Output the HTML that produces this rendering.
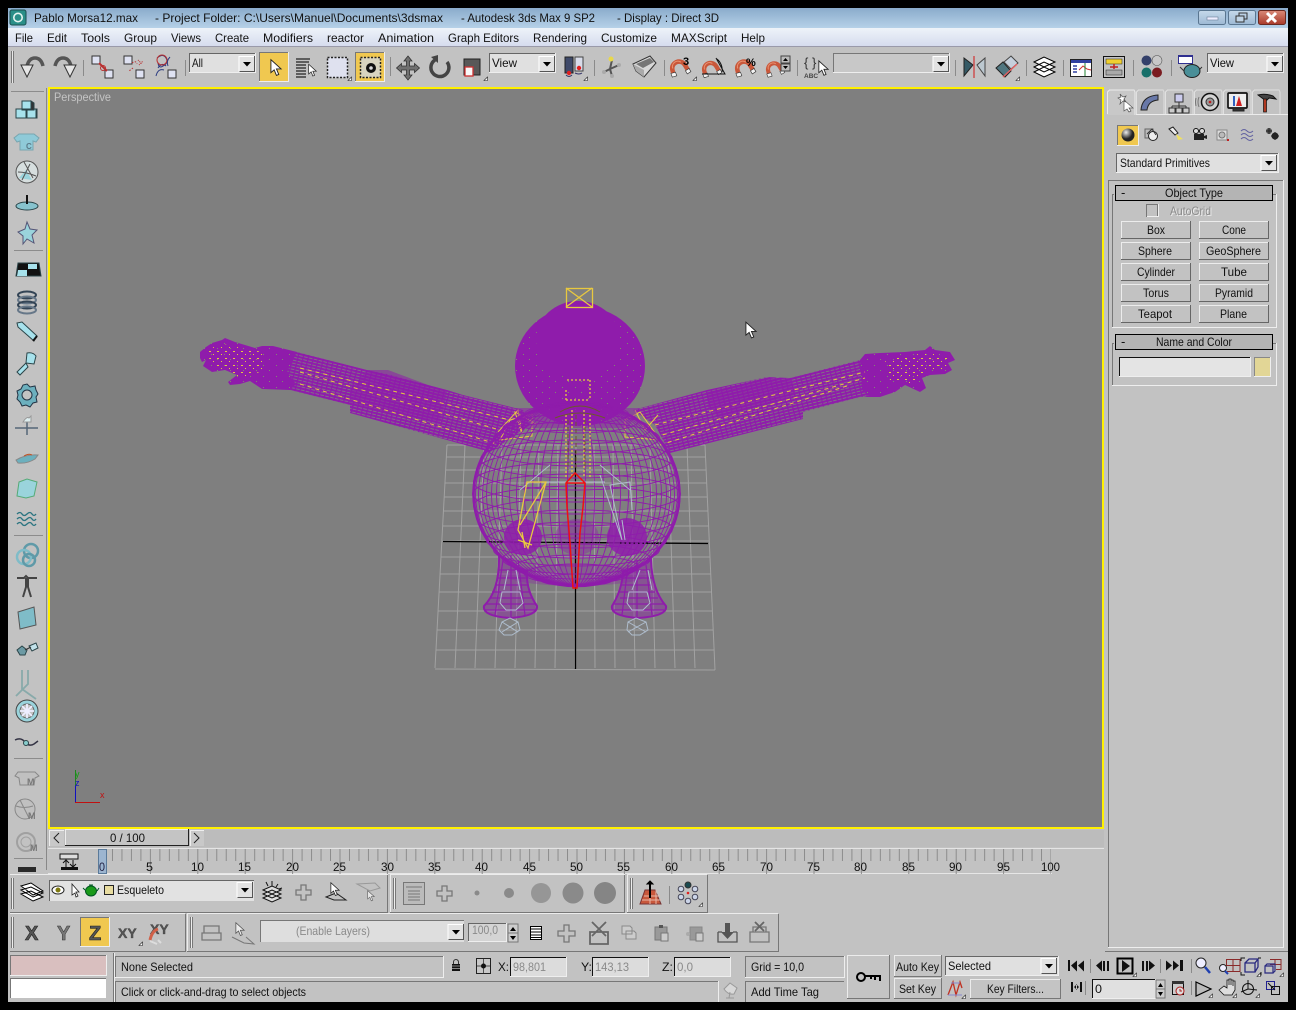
<!DOCTYPE html>
<html><head><meta charset="utf-8"><title>Pablo Morsa12.max - 3ds Max 9</title>
<style>
html,body{margin:0;padding:0;background:#000;width:1296px;height:1010px;overflow:hidden}
svg{display:block}
text{font-family:"Liberation Sans",sans-serif;font-size:12px;fill:#111}
.g{fill:#8a8a8a}
.h{fill:none;stroke:#ececec}
.s{fill:none;stroke:#6a6a6a}
.k{shape-rendering:crispEdges}
.sep{stroke:#8a8a8a;stroke-width:1;shape-rendering:crispEdges}
</style></head><body>
<svg width="1296" height="1010" viewBox="0 0 1296 1010" xmlns="http://www.w3.org/2000/svg">
<defs>
<linearGradient id="tb" x1="0" y1="0" x2="0" y2="1"><stop offset="0" stop-color="#8aabcb"/><stop offset="1" stop-color="#b6d1e8"/></linearGradient>
<linearGradient id="mb" x1="0" y1="0" x2="0" y2="1"><stop offset="0" stop-color="#eef3f9"/><stop offset="1" stop-color="#d6dcee"/></linearGradient>
<linearGradient id="cl" x1="0" y1="0" x2="0" y2="1"><stop offset="0" stop-color="#d98a78"/><stop offset="1" stop-color="#a93a2a"/></linearGradient>
<linearGradient id="wb" x1="0" y1="0" x2="0" y2="1"><stop offset="0" stop-color="#c6d9ea"/><stop offset="1" stop-color="#9db9d4"/></linearGradient>
<radialGradient id="sph" cx=".35" cy=".3"><stop offset="0" stop-color="#eee"/><stop offset="1" stop-color="#222"/></radialGradient>
<pattern id="tick" width="9.48" height="12" patternUnits="userSpaceOnUse" x="102.5" y="849"><rect width="1" height="12" fill="#8c8c8c"/></pattern>
<pattern id="tick5" width="47.4" height="13" patternUnits="userSpaceOnUse" x="102.5" y="860"><rect width="1" height="13" fill="#8c8c8c"/></pattern>
<pattern id="armL" width="5" height="6" patternUnits="userSpaceOnUse" patternTransform="rotate(14)"><rect width="5" height="6" fill="#7f7f7f"/><rect width="5" height="2.2" fill="#8f1cab"/><rect y="3" width="5" height="2.200" fill="#8f1cab"/><rect width="1.300" height="6" fill="#8f1cab"/></pattern>
<pattern id="armR" width="5" height="6" patternUnits="userSpaceOnUse" patternTransform="rotate(-14)"><rect width="5" height="6" fill="#7f7f7f"/><rect width="5" height="2.2" fill="#8f1cab"/><rect y="3" width="5" height="2.200" fill="#8f1cab"/><rect width="1.300" height="6" fill="#8f1cab"/></pattern>
<pattern id="speck" width="13" height="11" patternUnits="userSpaceOnUse"><rect width="13" height="11" fill="#8f1cab"/><rect x="3" y="2" width="1" height="1" fill="#7f8a6f"/><rect x="9" y="7" width="1" height="1" fill="#7f8a6f"/></pattern>
<pattern id="yst" width="8" height="7" patternUnits="userSpaceOnUse"><rect x="1" y="1" width="2" height="1" fill="#e8c840"/><rect x="5" y="4" width="1" height="1" fill="#e8c840"/></pattern>
<symbol id="dd" viewBox="0 0 16 16" overflow="visible"><rect x="0" y="0" width="16" height="16" fill="#e2e2e2"/><path d="M0 15.5V.5H15.5" fill="none" stroke="#fff"/><path d="M.5 15.5H15.5V0" fill="none" stroke="#555"/><path d="M4 6h8l-4 4.5z" fill="#000"/></symbol>
<symbol id="cur" viewBox="0 0 13 20" overflow="visible"><path d="M1 1V15L4.5 12 7 18 9.5 17 7 11H12Z" fill="#fff" stroke="#222" stroke-width="1"/></symbol>
<symbol id="mag" viewBox="0 0 22 22" overflow="visible"><path d="M4 18 L2.500 12 A7.500 7.500 0 0 1 16 6.500 L20 13" fill="none" stroke="#c9573a" stroke-width="5"/><path d="M3 11 A6 6 0 0 1 12 4" fill="none" stroke="#e89070" stroke-width="1.200"/><path d="M1 16.500l5-1.500 1.500 4-5 1.500zM17 13.500l4-2.500 2 3.500-4 2.500z" fill="#f4f4f4" stroke="#333" stroke-width=".7"/></symbol>
<symbol id="cm" viewBox="0 0 4 4" overflow="visible"><path d="M0 3.5H3.5V0z" fill="#fff" stroke="#222" stroke-width=".6"/></symbol>
</defs>

<rect width="1296" height="1010" fill="#000"/>
<rect x="8" y="8" width="1280" height="994" fill="#c2c2c2"/>

<!-- title bar -->
<rect x="8" y="8" width="1280" height="20" fill="url(#tb)"/>
<rect x="10" y="10" width="16" height="15" rx="2" fill="#2a8f88" stroke="#1a4f4f"/>
<circle cx="18" cy="17.5" r="4.2" fill="none" stroke="#e4f4f0" stroke-width="1.6"/>
<text x="34" y="22" textLength="104" lengthAdjust="spacingAndGlyphs">Pablo Morsa12.max</text>
<text x="155" y="22" textLength="288" lengthAdjust="spacingAndGlyphs">- Project Folder: C:\Users\Manuel\Documents\3dsmax</text>
<text x="461" y="22" textLength="134" lengthAdjust="spacingAndGlyphs">- Autodesk 3ds Max 9 SP2</text>
<text x="617" y="22" textLength="102" lengthAdjust="spacingAndGlyphs">- Display : Direct 3D</text>
<rect x="1198.500" y="10.500" width="27" height="14" rx="2" fill="url(#wb)" stroke="#5a7690"/>
<rect x="1207" y="17" width="11" height="3" fill="#eef" stroke="#6a7f96" stroke-width=".6"/>
<rect x="1228.500" y="10.500" width="27" height="14" rx="2" fill="url(#wb)" stroke="#5a7690"/>
<rect x="1239" y="13" width="8" height="6" fill="none" stroke="#333"/><rect x="1236" y="16" width="8" height="6" fill="#c0d4e6" stroke="#333"/>
<rect x="1258.500" y="10.500" width="27" height="14" rx="2" fill="url(#cl)" stroke="#6a2a20"/>
<path d="M1267 13l9 9M1276 13l-9 9" stroke="#fff" stroke-width="3"/>

<!-- menu bar -->
<rect x="8" y="28" width="1280" height="18" fill="url(#mb)"/>
<rect x="8" y="46" width="1280" height="1" fill="#9a9aaa"/>
<text x="15" y="42" textLength="18" lengthAdjust="spacingAndGlyphs">File</text>
<text x="47" y="42" textLength="20" lengthAdjust="spacingAndGlyphs">Edit</text>
<text x="81" y="42" textLength="29" lengthAdjust="spacingAndGlyphs">Tools</text>
<text x="124" y="42" textLength="33" lengthAdjust="spacingAndGlyphs">Group</text>
<text x="171" y="42" textLength="30" lengthAdjust="spacingAndGlyphs">Views</text>
<text x="215" y="42" textLength="34" lengthAdjust="spacingAndGlyphs">Create</text>
<text x="263" y="42" textLength="50" lengthAdjust="spacingAndGlyphs">Modifiers</text>
<text x="327" y="42" textLength="37" lengthAdjust="spacingAndGlyphs">reactor</text>
<text x="378" y="42" textLength="56" lengthAdjust="spacingAndGlyphs">Animation</text>
<text x="448" y="42" textLength="71" lengthAdjust="spacingAndGlyphs">Graph Editors</text>
<text x="533" y="42" textLength="54" lengthAdjust="spacingAndGlyphs">Rendering</text>
<text x="601" y="42" textLength="56" lengthAdjust="spacingAndGlyphs">Customize</text>
<text x="671" y="42" textLength="56" lengthAdjust="spacingAndGlyphs">MAXScript</text>
<text x="741" y="42" textLength="24" lengthAdjust="spacingAndGlyphs">Help</text>

<!-- main toolbar -->
<g class="k"><rect x="11" y="51" width="1" height="32" fill="#777"/><rect x="13" y="51" width="1" height="32" fill="#777"/><rect x="12" y="51" width="1" height="32" fill="#e8e8e8"/></g>
<path d="M27 66Q29 58 35 58 41 58 43 66" fill="none" stroke="#555" stroke-width="3.5"/><path d="M21 65H33L27 77Z" fill="#e6e6e6" stroke="#333"/>
<path d="M55 66Q57 58 63 58 69 58 71 66" fill="none" stroke="#555" stroke-width="3.5"/><path d="M64 65H76L70 77Z" fill="#e6e6e6" stroke="#333"/>
<g class="sep"><path d="M83.500 60V76M185.500 60V76M390.500 57V76M594.500 60V76M664.500 60V76M797.500 60V76M955.500 60V76M1026.500 60V76M1063.500 60V76M1133.500 60V76M1171.500 60V76"/></g>
<!-- link -->
<rect x="92" y="56" width="8" height="8" fill="#dfe2f2" stroke="#333"/><rect x="105" y="70" width="8" height="8" fill="#dfe2f2" stroke="#333"/><path d="M99 63l8 8" stroke="#b83030" stroke-width="2"/><circle cx="103" cy="68" r="2.500" fill="none" stroke="#b83030"/>
<rect x="124" y="56" width="8" height="8" fill="#dfe2f2" stroke="#333"/><rect x="136" y="70" width="8" height="8" fill="#dfe2f2" stroke="#333"/><path d="M132 63q4-3 5 1M133 68l-4 3" stroke="#b83030" fill="none" stroke-dasharray="1.500 1.500"/><path d="M138 60l4 4M139 65l4-4" stroke="#b83030" stroke-dasharray="1 1"/>
<path d="M157 58q6-5 9 0t-3 8q-4 3-5-3M158 68q4-6 8-2M156 76q2-8 8-6" fill="none" stroke="#2a3a80"/><circle cx="162" cy="60" r="5" fill="none" stroke="#b83030"/><path d="M170 57q-4 4-2 9" stroke="#2a3a80" fill="none"/><rect x="168" y="70" width="8" height="8" fill="#dfe2f2" stroke="#333"/>
<!-- All dropdown -->
<rect x="189" y="53" width="67" height="20" fill="#e0e0e0" class="k"/><path class="k" d="M189.500 73V53.500H256" fill="none" stroke="#666" stroke-width="1"/><path class="k" d="M189 72.500H255.500V53" fill="none" stroke="#eee"/>
<use href="#dd" x="239" y="56" width="16" height="16"/>
<text x="192" y="67" textLength="11" lengthAdjust="spacingAndGlyphs">All</text>
<!-- select btn -->
<rect x="259" y="52" width="30" height="30" fill="#f0c850" class="k"/><path class="k" d="M259.500 82V52.500H289" fill="none" stroke="#777"/><path class="k" d="M259 81.500H288.500V52" fill="none" stroke="#eee"/>
<use href="#cur" x="270" y="58" width="12" height="20"/>
<!-- select by name -->
<path d="M296 59H310M296 62H309M296 65H306M296 68H306M296 71H306M296 74H306M296 77H306" stroke="#222" stroke-width="1.2"/><use href="#cur" x="308" y="63" width="9" height="15"/>
<rect x="327.500" y="57.500" width="20" height="20" fill="#dfe1ef" stroke="#222" stroke-dasharray="2 1.500" stroke-width="1.500"/><use href="#cm" x="348" y="77" width="4" height="4"/>
<rect x="355" y="52" width="30" height="30" fill="#f0c850" class="k"/><path class="k" d="M355.500 82V52.500H385" fill="none" stroke="#777"/><path class="k" d="M355 81.500H384.500V52" fill="none" stroke="#eee"/>
<rect x="360.500" y="57.500" width="20" height="20" fill="#d8d4c0" stroke="#222" stroke-dasharray="2 1.500" stroke-width="1.500"/><circle cx="371" cy="68" r="5" fill="#111"/><circle cx="371" cy="68" r="1.800" fill="#ddd"/>
<!-- move -->
<path d="M408 56l4 5h-2.500v5H414.500v-2.500l5 4.500-5 4.500V70H409.500v5H412l-4 5-4-5h2.500V70H401.500v2.500l-5-4.500 5-4.500V66H406.500V61H404z" fill="#707070" stroke="#333" stroke-width=".8"/>
<!-- rotate -->
<path d="M435 60A9 9 0 1 0 447 62" fill="none" stroke="#444" stroke-width="3.500"/><path d="M431 57l7-2 0 8z" fill="#444"/>
<!-- scale -->
<rect x="464" y="59" width="16" height="16" fill="#585858" stroke="#222"/><rect x="465" y="67" width="8" height="9" fill="#f8f8f8" stroke="#cc3030" stroke-width="1.300"/>
<use href="#cm" x="484" y="77" width="4" height="4"/>
<!-- View dd -->
<rect x="489" y="53" width="67" height="20" fill="#e0e0e0" class="k"/><path class="k" d="M489.500 73V53.500H556" fill="none" stroke="#666"/><path class="k" d="M489 72.500H555.500V53" fill="none" stroke="#eee"/>
<use href="#dd" x="539" y="56" width="16" height="16"/>
<text x="492" y="67" textLength="25" lengthAdjust="spacingAndGlyphs">View</text>
<!-- pivot -->
<rect x="565" y="57" width="8" height="16" fill="#3f4a6a" stroke="#222"/><rect x="575" y="57" width="8" height="14" fill="#d8dcea" stroke="#444"/><circle cx="569" cy="73" r="2.200" fill="#e02020"/><circle cx="579" cy="68" r="2.200" fill="#e02020"/><path d="M566 75q3 3 6 0M575 73q4 2 7 0" stroke="#336" fill="none"/>
<use href="#cm" x="584" y="77" width="4" height="4"/>
<!-- manipulate -->
<path d="M612 60L610 69 604 72M610 69L619 65M610 69L612 76" stroke="#555" stroke-width="2" fill="none"/><circle cx="611" cy="59" r="2.500" fill="#e8d84a"/><circle cx="604" cy="72" r="2" fill="#aaa"/><circle cx="619" cy="65" r="2" fill="#aaa"/><circle cx="612" cy="76" r="2" fill="#aaa"/>
<!-- keyboard -->
<path d="M633 64L650 56 656 63 644 77 636 71z" fill="#d8d8d8" stroke="#333"/><path d="M636 64L650 58 654 62 643 68z" fill="#777"/><path d="M636 71L644 77V70L633 64z" fill="#aaa"/>
<!-- snaps -->
<use href="#mag" x="670" y="58" width="20" height="21"/><text x="683" y="65" style="font-size:11px;font-weight:bold;fill:#000">3</text><use href="#cm" x="693" y="77" width="4" height="4"/>
<use href="#mag" x="702" y="60" width="19" height="19"/><path d="M702 74H725L716 58M717 59A14 14 0 0 1 722 72" fill="none" stroke="#111"/>
<use href="#mag" x="735" y="58" width="20" height="21"/><text x="746" y="66" style="font-size:11px;font-weight:bold;fill:#000">%</text>
<use href="#mag" x="766" y="60" width="18" height="19"/><rect x="781" y="56" width="9" height="7" fill="#bbb" stroke="#444"/><rect x="781" y="64" width="9" height="7" fill="#bbb" stroke="#444"/><path d="M783 61l2.500-3 2.500 3zM783 66l2.500 3 2.500-3z" fill="#000"/>
<!-- named selection -->
<text x="804" y="67" style="font-size:13px;fill:#333">{ }</text><text x="804" y="78" style="font-size:6.500px;font-weight:bold;fill:#444">ABC</text><use href="#cur" x="818" y="59" width="11" height="19"/>
<!-- named input -->
<rect x="833" y="53" width="117" height="20" fill="#c8c8c8" class="k"/><path class="k" d="M833.500 73V53.500H950" fill="none" stroke="#777"/><path class="k" d="M833 72.500H949.500V53" fill="none" stroke="#eee"/>
<use href="#dd" x="933" y="56" width="16" height="16"/>
<!-- mirror -->
<path d="M964 58l9 7-9 11z" fill="#355a66" stroke="#222"/><path d="M985 58l-8 7 8 11z" fill="#bcc8d0" stroke="#444"/><path d="M974 56V78" stroke="#cc5050" stroke-width="1.500"/>
<!-- align -->
<path d="M996 68l7-6 8 9-6 6z" fill="#4f7680" stroke="#222"/><path d="M1004 62l7-6 7 7-7 6z" fill="#c6d0dc" stroke="#444"/><path d="M1003 77l14-13" stroke="#e06060" stroke-width="1.500"/><use href="#cm" x="1016" y="77" width="4" height="4"/>
<!-- layers -->
<path d="M1034 62l10-5 11 5-11 5zM1034 67l10-5 11 5-11 5zM1034 72l10-5 11 5-11 5z" fill="#fff" stroke="#000"/>
<!-- curve editor -->
<rect x="1070.500" y="59.500" width="21" height="17" fill="#fff" stroke="#222"/><rect x="1071" y="60" width="20" height="3" fill="#3040a0"/><path d="M1073 66h4M1073 69h4M1073 72h4" stroke="#3040a0" stroke-width="1.500"/><path d="M1079 70l4-4 4 3 4 1" fill="none" stroke="#d03030"/><path d="M1085 63V76" stroke="#208030"/>
<!-- schematic -->
<rect x="1103.500" y="56.500" width="21" height="21" fill="#c4c4c4" stroke="#111"/><rect x="1106" y="59" width="16" height="5" fill="#f0d030" stroke="#222" stroke-width=".5"/><rect x="1106" y="70" width="16" height="5" fill="#aaa" stroke="#222" stroke-width=".5"/><path d="M1114 64V69M1110 67h8" stroke="#c02020" stroke-width="1.500"/>
<!-- materials -->
<circle cx="1146.500" cy="60.500" r="5" fill="#34406a"/><circle cx="1157" cy="60.500" r="5" fill="#c8c8c8" stroke="#555" stroke-width=".6"/><circle cx="1146.500" cy="72.500" r="5" fill="#18706a"/><circle cx="1157" cy="72.500" r="5" fill="#7a1c20"/>
<!-- render -->
<rect x="1178.500" y="55.500" width="14" height="8" fill="#fff" stroke="#303090"/><rect x="1178" y="55" width="15" height="2" fill="#303090"/><ellipse cx="1192" cy="71" rx="8" ry="6.500" fill="#4a8f98" stroke="#222"/><path d="M1184 71l-4-4M1199 70l3-3" stroke="#333"/>
<!-- view dd -->
<rect x="1207" y="53" width="77" height="20" fill="#e0e0e0" class="k"/><path class="k" d="M1207.500 73V53.500H1284" fill="none" stroke="#666"/><path class="k" d="M1207 72.500H1283.500V53" fill="none" stroke="#eee"/>
<use href="#dd" x="1267" y="56" width="16" height="16"/>
<text x="1210" y="67" textLength="24" lengthAdjust="spacingAndGlyphs">View</text>

<!-- viewport -->
<rect x="49" y="88" width="1054" height="740" fill="#7f7f7f" stroke="#fff000" stroke-width="2.200" class="k"/>
<text x="54" y="101" textLength="57" lengthAdjust="spacingAndGlyphs" style="fill:#c4c4c4">Perspective</text>

<!-- construction grid -->
<path fill="none" stroke="#a2a2a2" d="M447 445L435 668M465 445L455 668M484 445L475 668M502 445L495 668M521 445L515 668M539 445L535 668M558 445L555 668M576 445L575 668M594 445L595 668M613 445L615 668M631 445L635 668M650 445L655 668M668 445L675 668M687 445L695 668M705 445L715 670M447 445H705M446 457H706M446 470H706M445 483H707M444 497H707M443 511H708M443 526H709M442 541H709M441 557H710M440 574H711M439 592H712M438 611H712M437 630H713M436 650H714M435 669L715 670"/>
<path d="M443 541.500L708 543.500M575.500 450V669" stroke="#000" stroke-width="1.300"/>

<!-- arms -->
<polygon points="523,410 463,395 447,390 387,374 367,370 297,352 273,348 270,375 262,387 290,390 350,405 350,413 490,452 530,425" fill="url(#armL)"/>
<polygon points="200,352 206,347 212,343 222,340 225,338 235,342 255,348 262,346 273,346 297,352 287,372 296,384 290,390 262,389 250,381 240,384 230,385 228,382 237,375 225,370 212,372 203,366 206,360 202,362 200,358" fill="url(#speck)"/>
<polygon points="367,370 388,370 447,392 440,422 350,405 350,390" fill="#8f1cab" opacity=".55"/>
<polygon points="633,410 707,390 767,377 790,378 860,360 880,353 880,397 860,397 803,412 803,419 670,453 655,425" fill="url(#armR)"/>
<polygon points="860,360 865,354 880,353 905,352 925,350 930,346 935,350 950,352 955,360 948,363 952,370 945,374 930,375 922,378 926,388 920,392 905,385 895,392 880,397 870,397 862,390" fill="url(#speck)"/>
<polygon points="707,392 767,378 790,378 795,395 720,418 708,408" fill="#8f1cab" opacity=".55"/>
<!-- arm bones -->
<path fill="none" stroke="#e8c840" stroke-dasharray="4 4" d="M300 372L500 430M300 368L510 420M300 384L500 445"/>
<polygon points="206,350 222,344 262,352 266,370 240,378 232,372 212,366" fill="url(#yst)"/>
<path fill="none" stroke="#e8c840" d="M498 432L518 410 522 434 515 412 538 425M510 420L532 414V436L500 440Z"/>
<path fill="none" stroke="#e8c840" stroke-dasharray="4 4" d="M655 425L865 372M655 437L865 378M660 445L850 385"/>
<polygon points="885,360 930,352 948,358 945,370 925,372 915,384 890,380" fill="url(#yst)"/>
<path fill="none" stroke="#e8c840" d="M625 420L640 412 660 440 625 437ZM635 410L645 430 658 415"/>

<!-- head -->
<ellipse cx="580" cy="366" rx="65" ry="60" fill="url(#speck)"/>
<ellipse cx="578" cy="340" rx="42" ry="39" fill="#8f1cab"/>
<!-- body wire -->
<g fill="none" stroke="#8f1cab" stroke-width=".9">
<ellipse cx="576.500" cy="494" rx="103" ry="92" stroke-width="2.500"/>
<ellipse cx="576.500" cy="494" rx="9" ry="92"/><ellipse cx="576.500" cy="494" rx="18" ry="92"/><ellipse cx="576.500" cy="494" rx="27" ry="92"/><ellipse cx="576.500" cy="494" rx="36" ry="92"/><ellipse cx="576.500" cy="494" rx="44" ry="92"/><ellipse cx="576.500" cy="494" rx="52" ry="92"/><ellipse cx="576.500" cy="494" rx="60" ry="92"/><ellipse cx="576.500" cy="494" rx="67" ry="92"/><ellipse cx="576.500" cy="494" rx="74" ry="92"/><ellipse cx="576.500" cy="494" rx="80" ry="92"/><ellipse cx="576.500" cy="494" rx="85" ry="92"/><ellipse cx="576.500" cy="494" rx="90" ry="92"/><ellipse cx="576.500" cy="494" rx="94" ry="92"/><ellipse cx="576.500" cy="494" rx="98" ry="92"/><ellipse cx="576.500" cy="494" rx="101" ry="92"/>
<ellipse cx="576.500" cy="494" rx="104" ry="20"/>
<ellipse cx="576.500" cy="506" rx="103" ry="20"/><ellipse cx="576.500" cy="482" rx="103" ry="20"/>
<ellipse cx="576.500" cy="518" rx="100" ry="20"/><ellipse cx="576.500" cy="470" rx="100" ry="20"/>
<ellipse cx="576.500" cy="529" rx="96" ry="19"/><ellipse cx="576.500" cy="459" rx="96" ry="19"/>
<ellipse cx="576.500" cy="540" rx="90" ry="18"/><ellipse cx="576.500" cy="448" rx="90" ry="18"/>
<ellipse cx="576.500" cy="550" rx="83" ry="16"/><ellipse cx="576.500" cy="438" rx="83" ry="16"/>
<ellipse cx="576.500" cy="559" rx="74" ry="15"/><ellipse cx="576.500" cy="429" rx="74" ry="15"/>
<ellipse cx="576.500" cy="567" rx="62" ry="12"/><ellipse cx="576.500" cy="421" rx="62" ry="12"/>
<ellipse cx="576.500" cy="574" rx="52" ry="10"/><ellipse cx="576.500" cy="414" rx="52" ry="10"/>
<ellipse cx="576.500" cy="580" rx="36" ry="6"/><ellipse cx="576.500" cy="408" rx="36" ry="6"/>
</g>
<path d="M515 408H640L628 428H525Z" fill="#8f1cab" opacity=".5"/>
<!-- legs -->
<g fill="none" stroke="#8f1cab" stroke-width="1.200">
<path d="M499 555Q500 590 484 606Q482 616 510 618Q538 616 537 606Q526 590 527 572Z" fill="rgba(143,28,171,.42)" stroke-width="2"/>
<path d="M651 560Q652 590 666 606Q668 616 638 618Q610 616 612 606Q622 590 623 572Z" fill="rgba(143,28,171,.42)" stroke-width="2"/>
<path d="M491 598H532M486 604H536M485 610H536M495 585H529M497 578H528M498 570H527M492 592H530M511 555V618M503 560L495 615M518 560L525 615"/>
<path d="M620 598H658M614 604H664M614 610H664M622 585H652M622 578H652M624 570H650M618 592H655M637 560V618M628 565L622 615M646 565L652 615"/>
</g>
<!-- hip blobs -->
<ellipse cx="523" cy="537" rx="19" ry="18" fill="#8f1cab" opacity=".85"/>
<ellipse cx="627" cy="537" rx="20" ry="19" fill="#8f1cab" opacity=".85"/>
<ellipse cx="577" cy="537" rx="22" ry="18" fill="#8f1cab" opacity=".4"/>
<ellipse cx="576" cy="575" rx="70" ry="11" fill="#8f1cab" opacity=".3"/>
<!-- horizon over -->
<path d="M480 541.500L500 542M550 542.500L600 542.500M620 543L660 543.500" stroke="#000" stroke-dasharray="1.500 3"/>
<!-- bones -->
<g fill="none" stroke="#aebccc" stroke-width="1">
<path d="M550 465L520 490M600 465L630 490M545 482L605 482M600 475L622 540 610 485 630 482 632 510M622 520L625 540M508 570L504 590M516 570L520 590M640 570L632 590M648 570L652 590"/>
<path d="M502 592H520L523 603 516 610H506L500 603ZM629 592H647L650 603 643 610H632L627 603Z"/>
<path d="M502 622L510 618 518 622 520 630 512 635H504L499 630ZM502 622L518 632M518 622L502 632M628 622L636 618 646 622 648 630 640 635H632L627 630ZM628 622L646 632M646 622L628 632"/>
</g>
<g fill="none" stroke="#e8c840" stroke-width="1.300">
<path d="M527 482H546L528 548 518 530ZM546 482L520 525M518 540L532 545M522 532L525 548"/>
<path d="M566 415V478M572 410V478M584 410V478M590 415V478" stroke-dasharray="2 2"/>
<path d="M567 380H590M566 390V400M590 380V400M566 400H590" stroke-dasharray="2 2"/>
<rect x="566.500" y="288.500" width="26" height="19"/><path d="M566 288L592 307M592 288L566 307"/>
</g>
<path d="M560 412q20-12 40 0M555 418q25-10 50 0" fill="none" stroke="#6c5a28"/>
<path d="M568 420V470M576 415V470M585 420V470" stroke="#6c5a28" stroke-dasharray="4 3"/>
<path d="M566 483H585M575 473L566 483 567 507 570 543 573 588H577L580 533 583 507 585 483ZM575 473L585 483" fill="none" stroke="#f01010" stroke-width="1.500"/>
<!-- axis tripod -->
<path d="M75.500 770V802" stroke="#208020"/><path d="M75.500 786V802" stroke="#1010c0"/><path d="M75 802.500H100" stroke="#c01010"/>
<text x="75" y="777" style="font-size:9px;fill:#10a010">y</text><text x="75" y="786" style="font-size:9px;fill:#1010c0">z</text><text x="100" y="798" style="font-size:9px;fill:#c01010">x</text>
<!-- mouse cursor -->
<use href="#cur" x="745" y="321" width="12" height="19"/>

<!-- left toolbar -->
<rect x="46" y="88" width="1" height="782" fill="#888"/>
<g class="sep" style="stroke:#8c8c8c"><path d="M11 91.500H44M14 250.500H43M14 535.500H43M14 758.500H43M14 858.500H43"/></g>
<g stroke="#2a4448" stroke-width="1" fill="#a7e2ec">
<path d="M22 101h9v9h-9zM16 109h10v9h-10zM27 109h10v9h-10z"/><path d="M31 101l3 2v7h-3zM37 109v9h-1v-9z" fill="#333"/>
<path d="M19 134h15l5 4-3 4-3-1v9h-13v-9l-3 1-3-4z" fill="#8fcad8" stroke="#78a6b0"/>
<circle cx="27" cy="172" r="11" fill="#d6dede" stroke="#555"/><path d="M19 178l7-8 6 10z" fill="#9ad4dc" stroke="none"/><path d="M24 162l9 16M18 172q8 0 18 4M22 180l8-16" stroke="#555" fill="none"/>
<ellipse cx="27" cy="206" rx="11" ry="4" fill="#87c3ce"/><path d="M27 195V204" stroke="#111" stroke-width="2"/>
<path d="M27 222l3 7 7 1-5 5 2 8-7-4-4 5v-8l-5-4 7-3z" fill="#9ad4dc" stroke="#557"/>
<path d="M18 263h21l2 13H16z" fill="#111"/><path d="M18 270h9v6H17zM28 264h9v5H28z" fill="#a7e2ec" stroke="none"/>
<ellipse cx="27" cy="295" rx="9" ry="3.500" fill="none" stroke="#345" stroke-width="2"/><ellipse cx="27" cy="300" rx="9" ry="3.500" fill="none" stroke="#678" stroke-width="2"/><ellipse cx="27" cy="305" rx="9" ry="3.500" fill="none" stroke="#345" stroke-width="2"/><ellipse cx="27" cy="310" rx="9" ry="3.500" fill="none" stroke="#678" stroke-width="2"/>
<path d="M17 323l5-1 15 14-3 5-16-14z" fill="#a7e2ec"/><path d="M33 341l4-5" stroke="#111" stroke-width="2"/>
<path d="M26 363L34 364 36 356Q33 352 27 353ZM26 363L17 372 20 375 28 367z" fill="#a7e2ec"/>
<path d="M27 384l3 3 5-1 1 4 2 4-2 3 1 5-4 1-3 4-4-2-4 1-2-4-3-3 1-4-1-4 4-2 2-4z" fill="#6cb0be" stroke="#234"/><circle cx="27" cy="395" r="5" fill="#c2c2c2" stroke="#234"/>
<path d="M15 428H38M27 422V435" stroke="#567" stroke-width="1.500" fill="none"/><path d="M23 422q4-6 6-4l2-2 0 6z" fill="#ddeef0" stroke="#999"/>
<path d="M16 460q10-6 22-5l-3 4q-8 5-17 4z" fill="#6cb0be" stroke="#888"/><path d="M24 456q5-3 8-1" stroke="#c05020" fill="none"/>
<path d="M19 482l8-3 10 3-3 14-8 2-9-2z" fill="#9ad4dc" stroke="#5a7"/>
<path d="M17 514q3-3 5 0t5 0 5 0 4 0M17 519q3-3 5 0t5 0 5 0 4 0M17 524q3-3 5 0t5 0 5 0 4 0" fill="none" stroke="#2a7480" stroke-width="1.300"/>
<circle cx="31" cy="551" r="7" fill="none" stroke="#5f9aa8" stroke-width="2.500"/><circle cx="24" cy="557" r="7" fill="none" stroke="#7fbcc8" stroke-width="2.500"/><circle cx="29" cy="560" r="6" fill="none" stroke="#5f9aa8" stroke-width="2.500"/>
<path d="M17 578h7l2-2 2 2h9M26 578v9l-3 10M28 578v9l3 10" fill="none" stroke="#444" stroke-width="2"/>
<path d="M18 612l16-5 2 18-16 4z" fill="#7fbcc8" stroke="#555"/>
<path d="M17 650l5-4 5 4-2 5h-5z" fill="#6c9aa4"/><path d="M29 646l7-3 2 5-6 3z" fill="#c2e2ea"/><path d="M25 650l6-3" stroke="#333"/>
<path d="M22 670v19l14 10M28 670v14l-12 12" fill="none" stroke="#8aa" stroke-width="1.800"/>
<circle cx="27" cy="711" r="11" fill="#9ad4dc" stroke="#444"/><circle cx="27" cy="711" r="7" fill="#c2c2c2" stroke="#666"/><path d="M27 704v14M20 711h14M22 706l10 10M32 706l-10 10" stroke="#eef" stroke-width="1.800"/>
<path d="M15 740q6-3 10 2t9 2l4-3" fill="none" stroke="#334" stroke-width="1.500"/><circle cx="26" cy="743" r="2.500" fill="#8cc"/>
<path d="M18 772h17l4 4-4 2-1 7h-14l-1-7-4-2z" fill="#c0c0c0" stroke="#888"/>
<circle cx="25" cy="809" r="10" fill="#c0c0c0" stroke="#888"/><path d="M20 800l9 18M16 806q8 3 17 0" stroke="#888" fill="none"/>
<circle cx="26" cy="842" r="9" fill="none" stroke="#a0a0a0" stroke-width="2"/><circle cx="26" cy="842" r="5" fill="none" stroke="#a0a0a0"/>
</g>
<text x="27" y="785" style="font-size:9px;font-weight:bold;fill:#777">M</text>
<text x="28" y="819" style="font-size:9px;font-weight:bold;fill:#777">M</text>
<text x="30" y="851" style="font-size:9px;font-weight:bold;fill:#777">M</text>
<rect x="18" y="867" width="18" height="5" fill="#2a2a2a"/>
<text x="26" y="149" style="font-size:8px;font-weight:bold;fill:#5a7a88">C</text>

<!-- time slider -->
<rect x="48" y="830" width="1056" height="17" fill="#bcbcbc"/>
<rect x="49" y="830" width="15" height="16" fill="#c8c8c8"/><path class="k" d="M49.500 846V830.500H64" fill="none" stroke="#eee"/>
<path d="M59 833l-5 5 5 5" fill="none" stroke="#222"/>
<rect x="65" y="829" width="123" height="16" fill="#c4c4c4"/><path class="k" d="M65.500 845V829.500H188" fill="none" stroke="#ececec"/><path class="k" d="M65 845.500H188.500V829" fill="none" stroke="#222"/>
<text x="110" y="842" textLength="35" lengthAdjust="spacingAndGlyphs">0 / 100</text>
<rect x="190" y="830" width="14" height="16" fill="#c8c8c8"/><path class="k" d="M190.500 846V830.500H204" fill="none" stroke="#eee"/>
<path d="M194 833l5 5-5 5" fill="none" stroke="#222"/>

<!-- ruler -->
<rect x="48" y="848" width="1056" height="1" fill="#e4e4e4"/>
<rect x="48" y="873" width="1004" height="1" fill="#e6e6e6"/>
<rect x="102" y="849" width="949" height="12" fill="url(#tick)"/>
<rect x="102" y="861" width="949" height="13" fill="url(#tick5)"/>
<rect x="60" y="854" width="18" height="5" fill="#ddd" stroke="#111"/><path d="M66 860v7M63 863l3-3 3 3M73 860v7M70 864l3 3 3-3" fill="none" stroke="#111"/><rect x="61" y="867" width="17" height="3" fill="#111"/>
<rect x="98.500" y="849.500" width="8" height="24" fill="#9cb5d0" stroke="#5a7a9a"/>
<text x="99" y="871" textLength="6" lengthAdjust="spacingAndGlyphs" style="fill:#224">0</text>
<g style="font-size:12px">
<text x="146" y="871" textLength="7" lengthAdjust="spacingAndGlyphs">5</text>
<text x="191" y="871" textLength="13" lengthAdjust="spacingAndGlyphs">10</text>
<text x="238" y="871" textLength="13" lengthAdjust="spacingAndGlyphs">15</text>
<text x="286" y="871" textLength="13" lengthAdjust="spacingAndGlyphs">20</text>
<text x="333" y="871" textLength="13" lengthAdjust="spacingAndGlyphs">25</text>
<text x="381" y="871" textLength="13" lengthAdjust="spacingAndGlyphs">30</text>
<text x="428" y="871" textLength="13" lengthAdjust="spacingAndGlyphs">35</text>
<text x="475" y="871" textLength="13" lengthAdjust="spacingAndGlyphs">40</text>
<text x="523" y="871" textLength="13" lengthAdjust="spacingAndGlyphs">45</text>
<text x="570" y="871" textLength="13" lengthAdjust="spacingAndGlyphs">50</text>
<text x="617" y="871" textLength="13" lengthAdjust="spacingAndGlyphs">55</text>
<text x="665" y="871" textLength="13" lengthAdjust="spacingAndGlyphs">60</text>
<text x="712" y="871" textLength="13" lengthAdjust="spacingAndGlyphs">65</text>
<text x="760" y="871" textLength="13" lengthAdjust="spacingAndGlyphs">70</text>
<text x="807" y="871" textLength="13" lengthAdjust="spacingAndGlyphs">75</text>
<text x="854" y="871" textLength="13" lengthAdjust="spacingAndGlyphs">80</text>
<text x="902" y="871" textLength="13" lengthAdjust="spacingAndGlyphs">85</text>
<text x="949" y="871" textLength="13" lengthAdjust="spacingAndGlyphs">90</text>
<text x="997" y="871" textLength="13" lengthAdjust="spacingAndGlyphs">95</text>
<text x="1041" y="871" textLength="19" lengthAdjust="spacingAndGlyphs">100</text>
</g>

<!-- layer toolbar -->
<g class="k" fill="none">
<path d="M10 874.500H388" stroke="#ececec"/><path d="M387.500 875V912.500H10" stroke="#777"/>
<path d="M390 874.500H625" stroke="#ececec"/><path d="M390.500 875V912" stroke="#ececec"/><path d="M624.500 875V912.500H390" stroke="#777"/>
<path d="M627 874.500H707" stroke="#ececec"/><path d="M627.500 875V912" stroke="#ececec"/><path d="M707.500 875V912.500H627" stroke="#777"/>
<path d="M10 913.500H185" stroke="#ececec"/><path d="M185.500 914V951.500H10" stroke="#777"/>
<path d="M187 913.500H778" stroke="#ececec"/><path d="M187.500 914V951" stroke="#ececec"/><path d="M778.500 914V951.500H187" stroke="#777"/>
<path d="M11.500 878V909M13.500 878V909M11.500 917V948M13.500 917V948M190.500 917V948M192.500 917V948M393.500 878V909M395.500 878V909M630.500 878V909M632.500 878V909" stroke="#777"/>
<path d="M12.500 878V909M12.500 917V948M191.500 917V948M394.500 878V909M631.500 878V909" stroke="#eee"/>
</g>
<path d="M21 886l10-3 12 8-10 4zM21 890l10-3 12 6-10 4zM21 894l10-3 12 6-10 4z" fill="#fff" stroke="#000"/>
<rect x="49" y="880" width="205" height="21" fill="#e2e2e2" class="k"/><path class="k" d="M49.500 901V880.500H254" fill="none" stroke="#666"/>
<use href="#dd" x="237" y="882" width="16" height="16"/>
<ellipse cx="58" cy="890" rx="6" ry="4" fill="#fff" stroke="#222"/><circle cx="58" cy="890" r="2.500" fill="#807a10"/>
<path d="M72 884v11l3-2 1 4 2-1-2-4h3z" fill="#fff" stroke="#222" stroke-width=".8"/>
<ellipse cx="91" cy="891" rx="5.500" ry="5" fill="#1a9a1a" stroke="#052"/><path d="M85 890l-2-2M97 891l2-3M89 885h4" stroke="#052"/>
<rect x="104.500" y="885.500" width="9" height="9" fill="#e8dca0" stroke="#222"/>
<text x="117" y="894" textLength="47" lengthAdjust="spacingAndGlyphs">Esqueleto</text>
<path d="M263 890l9-4 9 4-9 4zM263 894l9-4 9 4-9 4zM263 898l9-4 9 4-9 4z" fill="#ddd" stroke="#111"/><path d="M266 882l2 4M272 881v5M278 884l-2 3M282 888l-3 1" stroke="#111"/>
<path d="M301 885h5v5h5v5h-5v5h-5v-5h-5v-5h5z" fill="none" stroke="#777" stroke-width="1.300"/>
<path d="M326 897l10-4 10 7H334z" fill="none" stroke="#222"/><use href="#cur" x="330" y="882" width="10" height="15"/>
<path d="M357 884l18-1 5 5-10 3z" fill="none" stroke="#999"/><use href="#cur" x="367" y="890" width="8" height="12" opacity=".6"/>
<!-- middle paint toolbar -->
<rect x="403.500" y="882.500" width="21" height="22" fill="#bbb" stroke="#777"/><path d="M406 887h16M408 891h12M408 894h12M408 897h12M408 900h12" stroke="#777"/>
<path d="M442 886h5v5h5v5h-5v5h-5v-5h-5v-5h5z" fill="none" stroke="#777" stroke-width="1.300"/>
<circle cx="477" cy="893" r="2.500" fill="#8a8a8a"/><circle cx="509" cy="893" r="5" fill="#8a8a8a"/><circle cx="541" cy="893" r="10" fill="#8e8e8e" opacity=".85"/><circle cx="573" cy="893" r="10.500" fill="#8a8a8a"/><circle cx="605" cy="893" r="11" fill="#858585"/>
<!-- right toolbar -->
<path d="M640 904l5-14h10l6 14z" fill="#c8583c" stroke="#733"/><path d="M644 896h16M642 900h19M650 890v14M656 890v14" stroke="#e8b8a8"/><path d="M650 898V882" stroke="#000" stroke-width="2"/><path d="M647 884l3-3 3 3z" fill="#000" stroke="#000"/>
<path d="M669.500 886V904" class="sep"/>
<circle cx="688" cy="885" r="3" fill="#1a4a50" stroke="#333"/><circle cx="681" cy="889" r="2.800" fill="#cbd4e8" stroke="#445"/><circle cx="695" cy="889" r="2.800" fill="#cbd4e8" stroke="#445"/><circle cx="681" cy="897" r="2.800" fill="#cbd4e8" stroke="#445"/><circle cx="695" cy="897" r="2.800" fill="#cbd4e8" stroke="#445"/><circle cx="688" cy="901" r="2.800" fill="#cbd4e8" stroke="#445"/><circle cx="688" cy="893" r="1.300" fill="#e02020"/>
<use href="#cm" x="699" y="903" width="4" height="4"/>

<!-- axis constraint toolbar -->
<text x="25" y="940" style="font-size:20px;font-weight:bold;fill:#555;stroke:#222;stroke-width:.6">X</text>
<text x="57" y="940" style="font-size:20px;font-weight:bold;fill:#777;stroke:#333;stroke-width:.5">Y</text>
<rect x="80" y="917" width="30" height="30" fill="#f0c850" class="k"/><path class="k" d="M80.500 947V917.500H110" fill="none" stroke="#777"/><path class="k" d="M80 946.500H109.500V917" fill="none" stroke="#eee"/>
<text x="89" y="940" style="font-size:20px;font-weight:bold;fill:#555;stroke:#222;stroke-width:.6">Z</text>
<text x="118" y="938" style="font-size:14px;font-weight:bold;fill:#555;stroke:#333;stroke-width:.3">XY</text>
<use href="#cm" x="139" y="942" width="4" height="4"/>
<text x="150" y="934" style="font-size:14px;font-weight:bold;fill:#555;stroke:#333;stroke-width:.3">XY</text>
<path d="M150 940q2-9 8-11" fill="none" stroke="#d06048" stroke-width="3"/><path d="M150 941l7 3M158 940l3 3" stroke="#ddd" stroke-width="2"/>
<!-- layers row -->
<path d="M202 933v7h19v-7zM204 926h15v7h-15z" fill="none" stroke="#777" stroke-width="1.300"/>
<use href="#cur" x="235" y="922" width="10" height="15" opacity=".7"/><path d="M232 937l12 6 10 1-8-7" fill="none" stroke="#777"/>
<rect x="260" y="920" width="204" height="22" fill="#dedede" class="k"/><path class="k" d="M260.500 942V920.500H464" fill="none" stroke="#777"/>
<use href="#dd" x="448" y="923" width="16" height="18"/>
<text x="296" y="935" textLength="74" lengthAdjust="spacingAndGlyphs" class="g">(Enable Layers)</text>
<rect x="468" y="923" width="38" height="19" fill="#d4d4d4" class="k"/><path class="k" d="M468.500 942V923.500H506" fill="none" stroke="#666"/><path class="k" d="M468 941.500H506.500V923" fill="none" stroke="#eee"/>
<text x="472" y="934" textLength="26" lengthAdjust="spacingAndGlyphs" class="g">100,0</text>
<rect x="508" y="924" width="10" height="9" fill="#ccc" stroke="#777"/><rect x="508" y="933" width="10" height="9" fill="#ccc" stroke="#777"/><path d="M510 931l3-4 3 4zM510 936l3 4 3-4z" fill="#000"/>
<rect x="530.500" y="926.500" width="11" height="13" fill="#fff" stroke="#000"/><path d="M531 929h10M531 932h10M531 935h10M531 937.500h10" stroke="#000"/>
<path d="M564 925h5v6h6v5h-6v6h-5v-6h-6v-5h6z" fill="none" stroke="#777" stroke-width="1.300"/>
<path d="M590 932v12h18v-12zM592 922l14 14M606 922l-14 14" fill="none" stroke="#666" stroke-width="1.800"/>
<path d="M622 926h8l2 2v6h-10zM626 931h8l2 2v6h-10z" fill="#ccc" stroke="#8a8a8a"/>
<path d="M655 927h12v13h-12z" fill="#999" stroke="#777"/><path d="M659 925h4v3h-4z" fill="#555"/><path d="M661 933h7v8h-7z" fill="#ccc" stroke="#777"/>
<path d="M690 927h12v13h-12z" fill="#999" stroke="#888"/><path d="M696 933h7v8h-7z" fill="#ccc" stroke="#777"/><circle cx="688" cy="934" r="2" fill="#aaa"/>
<path d="M718 932v10h19v-10M722 932h-4M737 932h-4" fill="none" stroke="#555" stroke-width="1.300"/><path d="M725 923h5v9h4l-6.500 7-6.500-7h4z" fill="#555"/>
<path d="M750 932v10h19v-10zM753 927h13v5h-13z" fill="none" stroke="#777" stroke-width="1.300"/><path d="M755 922l9 9M764 922l-9 9" stroke="#666" stroke-width="1.800"/>

<!-- status bar -->
<rect x="10" y="955" width="96" height="20" fill="#d9bfbf"/><path class="k" d="M10.500 975V955.500H106" fill="none" stroke="#777"/><path class="k" d="M10 975.500H106.500V955" fill="none" stroke="#eee"/>
<rect x="10" y="978" width="96" height="20" fill="#fff"/><path class="k" d="M10.500 998V978.500H106" fill="none" stroke="#777"/>
<path class="k" d="M113.500 953V1002" stroke="#777"/><path class="k" d="M114.500 953V1002" stroke="#eee"/>
<path class="k" d="M115.500 977V956.500H443" fill="none" stroke="#777"/><path class="k" d="M115 977.500H443.500V956" fill="none" stroke="#eee"/>
<text x="121" y="971" textLength="72" lengthAdjust="spacingAndGlyphs">None Selected</text>
<path class="k" d="M115.500 1002V981.500H718" fill="none" stroke="#777"/><path class="k" d="M718.500 981V1002" stroke="#eee"/>
<text x="121" y="996" textLength="185" lengthAdjust="spacingAndGlyphs">Click or click-and-drag to select objects</text>
<rect x="452" y="964" width="8" height="7" fill="#111"/><path d="M453.500 964v-2a2.500 2.500 0 0 1 5 0v2" fill="none" stroke="#333"/><path d="M452 966h8M452 968.500h8" stroke="#aaa" stroke-width=".7"/>
<rect x="476.500" y="958.500" width="14" height="15" fill="#c8c8c8" stroke="#222"/><path d="M476 966h15M483.500 958v15" stroke="#222" stroke-width=".7"/><circle cx="483.500" cy="966" r="2.500" fill="#111"/>
<text x="498" y="971" textLength="11" lengthAdjust="spacingAndGlyphs">X:</text>
<rect x="510" y="957" width="56" height="19" fill="#dcdcdc"/><path class="k" d="M510.500 976V957.500H566" fill="none" stroke="#111"/><path class="k" d="M510 976.500H566.500V957" fill="none" stroke="#eee"/>
<text x="513" y="971" textLength="33" lengthAdjust="spacingAndGlyphs" class="g">98,801</text>
<text x="581" y="971" textLength="11" lengthAdjust="spacingAndGlyphs">Y:</text>
<rect x="592" y="957" width="56" height="19" fill="#dcdcdc"/><path class="k" d="M592.500 976V957.500H648" fill="none" stroke="#111"/><path class="k" d="M592 976.500H648.500V957" fill="none" stroke="#eee"/>
<text x="595" y="971" textLength="34" lengthAdjust="spacingAndGlyphs" class="g">143,13</text>
<text x="662" y="971" textLength="11" lengthAdjust="spacingAndGlyphs">Z:</text>
<rect x="674" y="957" width="56" height="19" fill="#dcdcdc"/><path class="k" d="M674.500 976V957.500H730" fill="none" stroke="#111"/><path class="k" d="M674 976.500H730.500V957" fill="none" stroke="#eee"/>
<text x="677" y="971" textLength="16" lengthAdjust="spacingAndGlyphs" class="g">0,0</text>
<path class="k" d="M745.500 977V956.500H844" fill="none" stroke="#777"/><path class="k" d="M745 977.500H844.500V956" fill="none" stroke="#eee"/>
<text x="751" y="971" textLength="53" lengthAdjust="spacingAndGlyphs">Grid = 10,0</text>
<path class="k" d="M745.500 1002V981.500H844" fill="none" stroke="#777"/>
<text x="751" y="996" textLength="68" lengthAdjust="spacingAndGlyphs">Add Time Tag</text>
<path d="M724 989q4 6 10 5l3-6-7-5z" fill="#d8d8d8" stroke="#999"/><path d="M730 992l-1 6M726 998h8" stroke="#999"/>
<!-- key button -->
<rect x="847" y="955" width="42" height="44" fill="#c4c4c4"/><path class="k" d="M847.500 999V955.500H889" fill="none" stroke="#ececec"/><path class="k" d="M847 998.500H889.500V955" fill="none" stroke="#777"/>
<circle cx="861" cy="977" r="4" fill="none" stroke="#000" stroke-width="2"/><path d="M865 976H880V981M875 976V980M871 976V979" fill="none" stroke="#000" stroke-width="2"/>
<rect x="894" y="955" width="47" height="22" fill="#c4c4c4"/><path class="k" d="M894.500 977V955.500H941" fill="none" stroke="#ececec"/><path class="k" d="M894 976.500H941.500V955" fill="none" stroke="#777"/>
<text x="896" y="971" textLength="43" lengthAdjust="spacingAndGlyphs">Auto Key</text>
<rect x="894" y="978" width="47" height="21" fill="#c4c4c4"/><path class="k" d="M894.500 999V978.500H941" fill="none" stroke="#ececec"/><path class="k" d="M894 998.500H941.500V978" fill="none" stroke="#777"/>
<text x="899" y="993" textLength="37" lengthAdjust="spacingAndGlyphs">Set Key</text>
<rect x="945" y="956" width="113" height="19" fill="#e0e0e0"/><path class="k" d="M945.500 975V956.500H1058" fill="none" stroke="#666"/><path class="k" d="M945 975.500H1058.500V956" fill="none" stroke="#eee"/>
<use href="#dd" x="1041" y="958" width="16" height="16"/>
<text x="948" y="970" textLength="43" lengthAdjust="spacingAndGlyphs">Selected</text>
<path d="M948 995l5-13 3 13 4-13 2 6" fill="none" stroke="#c03020" stroke-width="1.300"/><path d="M948 995h14M951 983h9" stroke="#8888cc"/><use href="#cm" x="962" y="995" width="4" height="4"/>
<rect x="970" y="979" width="90" height="20" fill="#c4c4c4"/><path class="k" d="M970.500 999V979.500H1060" fill="none" stroke="#ececec"/><path class="k" d="M970 998.500H1060.500V979" fill="none" stroke="#777"/>
<text x="987" y="993" textLength="57" lengthAdjust="spacingAndGlyphs">Key Filters...</text>
<!-- playback -->
<g fill="#111">
<path d="M1068 960h2v11h-2zM1071 965.500l6-5v11zM1078 965.500l6-5v11z"/>
<path d="M1096 965.500l6-5v11zM1103 961h2v10h-2zM1107 961h2v10h-2z"/>
<path d="M1122 960l8 6-8 6z"/>
<path d="M1142 961h2v10h-2zM1146 961h2v10h-2zM1149 960.500l6 5-6 5z"/>
<path d="M1166 960.500l6 5-6 5zM1173 960.500l6 5-6 5zM1180 960h3v11h-3z"/>
<path d="M1071 982h2v10h-2zM1080 982h2v10h-2zM1074 987l3-3v6zM1079 987l-3-3v6z"/>
</g>
<rect x="1117.500" y="958.500" width="15" height="15" fill="none" stroke="#000" stroke-width="2"/>
<use href="#cm" x="1133" y="973" width="4" height="4"/>
<path class="sep" d="M1090.500 959V973M1160.500 959V973M1191.500 959V973M1191.500 981V995M1085.500 981V995"/>
<rect x="1092" y="979" width="63" height="19" fill="#e0e0e0"/><path class="k" d="M1092.500 998V979.500H1155" fill="none" stroke="#111"/><path class="k" d="M1092 998.500H1155.500V979" fill="none" stroke="#eee"/>
<text x="1095" y="993" textLength="7" lengthAdjust="spacingAndGlyphs">0</text>
<rect x="1156" y="980" width="9" height="9" fill="#ccc" stroke="#777"/><rect x="1156" y="989" width="9" height="9" fill="#ccc" stroke="#777"/><path d="M1158 987l2.500-4 2.500 4zM1158 992l2.500 4 2.500-4z" fill="#000"/>
<rect x="1172.500" y="981.500" width="11" height="13" fill="#ccc" stroke="#111"/><rect x="1172" y="981" width="12" height="3" fill="#333"/><circle cx="1180" cy="991" r="4" fill="#ddd" stroke="#b02020"/><path d="M1180 989v2h2" stroke="#b02020" fill="none"/>
<!-- nav -->
<circle cx="1201" cy="963" r="5" fill="#eef" stroke="#222"/><path d="M1205 967l5 6" stroke="#2040b0" stroke-width="2.500"/>
<path d="M1226 959.500h14v12h-13M1233 959v13M1226 965.500h14M1226.500 959v7" fill="none" stroke="#8a2a2a"/><circle cx="1223" cy="968" r="3.500" fill="#eef" stroke="#222"/><path d="M1225 971l3 3" stroke="#2040b0" stroke-width="2"/>
<path d="M1245 963h10v9h-10zM1245 963l4-4h9v8l-3 5M1255 963l3-4" fill="none" stroke="#2a2a80" stroke-width="1.300"/><path d="M1241 961v-3h4M1258 958h3M1241 972v3h4M1258 975h3v-3" fill="none" stroke="#111"/><use href="#cm" x="1257" y="973" width="4" height="4"/>
<path d="M1270 959.500h11v10h-5M1275 959.500v10M1270 964.500h11" fill="none" stroke="#8a2a2a"/><path d="M1265 966h8v7h-8zM1265 966l2-2h8v7l-2 2" fill="none" stroke="#2a2a80" stroke-width="1.200"/><use href="#cm" x="1280" y="973" width="4" height="4"/>
<path d="M1196 982l15 7-15 7z" fill="#bbb" stroke="#000" stroke-width="1.200"/><use href="#cm" x="1209" y="994" width="4" height="4"/>
<path d="M1219 990l5 5h8l3-5V981h-2v5-6h-2v5-6h-2v6-5h-2v8l-3-2z" fill="#ddd" stroke="#111" stroke-width=".8"/><use href="#cm" x="1233" y="994" width="4" height="4"/>
<circle cx="1248" cy="989" r="5.500" fill="none" stroke="#111"/><path d="M1248 980v9l-7 3M1248 989l9 1" fill="none" stroke="#111"/><use href="#cm" x="1256" y="994" width="4" height="4"/>
<rect x="1266.500" y="981.500" width="8" height="8" fill="none" stroke="#202090"/><rect x="1271.500" y="986.500" width="8" height="8" fill="none" stroke="#111"/><path d="M1268 983l7 7" stroke="#111"/>

<!-- right panel -->
<rect x="1105" y="88" width="183" height="864" fill="#c2c2c2"/>
<path class="k" d="M1105 951.500H1288" stroke="#777"/>
<!-- tabs -->
<g class="k">
<rect x="1107" y="90" width="28" height="25" fill="#c8c8c8"/>
<path d="M1107.500 114V92l2-2H1134l1 2V115" fill="none" stroke="#ececec"/>
<path d="M1136.500 114V92l2-2H1163l1 2V114M1165.500 114V92l2-2H1192l1 2V114M1194.500 114V92l2-2H1221l1 2V114M1223.500 114V92l2-2H1250l1 2V114M1252.500 114V92l2-2H1279l1 2V114" fill="none" stroke="#e0e0e0"/>
<path d="M1136 114.500H1288" stroke="#ececec"/>
</g>
<path d="M1120 94l3 3 3-1-2 3 2 3-3-1-3 3 1-4-3-2 3-1zM1124 100v11l3-2 2 3 2-1-2-3h4z" fill="#fff" stroke="#555" stroke-width=".7"/>
<path d="M1141 110q1-14 17-15v5q-10 1-11 10z" fill="#6878a8" stroke="#222"/>
<rect x="1175" y="94" width="8" height="8" fill="#ccccee" stroke="#333"/><path d="M1179 102v4M1172 106h14M1172 106v2M1186 106v2M1179 106v2" fill="none" stroke="#333"/><rect x="1169" y="108" width="6" height="5" fill="#ccc" stroke="#333"/><rect x="1176" y="108" width="6" height="5" fill="#ccc" stroke="#333"/><rect x="1183" y="108" width="6" height="5" fill="#ccc" stroke="#333"/>
<circle cx="1210" cy="102" r="8.500" fill="#d4d4d4" stroke="#111" stroke-width="1.500"/><circle cx="1210" cy="102" r="4" fill="#999" stroke="#333"/><circle cx="1210" cy="102" r="1.300" fill="#c02020"/><path d="M1199 97q-2 5 0 10M1196 98q-1 4 0 8" fill="none" stroke="#777"/>
<rect x="1228" y="93" width="19" height="15" rx="1" fill="#eee" stroke="#111" stroke-width="1.700"/><path d="M1233 96v10h2V96z" fill="#3060c0"/><path d="M1236 106l3-10 3 10z" fill="#d02020"/><path d="M1233 109v2h11v-2" fill="#333" stroke="#222"/>
<path d="M1258 95q7-2 15 1l3 3-7-1-3 3z" fill="#444" stroke="#111"/><rect x="1263.500" y="99" width="3" height="13" fill="#b03820" stroke="#111" stroke-width=".7"/>
<!-- subtabs -->
<rect x="1117" y="125" width="22" height="21" fill="#f0c850" class="k"/><path class="k" d="M1117.500 146V125.500H1139" fill="none" stroke="#777"/><path class="k" d="M1117 145.500H1138.500V125" fill="none" stroke="#eee"/>
<circle cx="1128" cy="135" r="6.500" fill="url(#sph)"/>
<rect x="1145" y="129" width="8" height="9" fill="#bbb" stroke="#666"/><circle cx="1153" cy="136" r="4.500" fill="#eee" stroke="#222"/><path d="M1147 134l5-5 4 6" fill="none" stroke="#333"/>
<path d="M1169 129l4-2 5 6-3 2z" fill="#eee" stroke="#222"/><path d="M1176 134l7 5-5 1z" fill="#f0e060"/>
<rect x="1194" y="134" width="10" height="6" fill="#222"/><circle cx="1196" cy="131" r="2.500" fill="#ddd" stroke="#111"/><circle cx="1202" cy="131" r="2.500" fill="#ddd" stroke="#111"/><path d="M1204 136l3-1v4l-3-1z" fill="#222"/>
<rect x="1217" y="130" width="10" height="10" fill="#ddd" stroke="#888"/><circle cx="1222" cy="135" r="3" fill="#bbb" stroke="#777"/><path d="M1227 140h2" stroke="#c02020" stroke-width="2"/>
<path d="M1241 131q3-3 6 0t6 0M1241 135q3-3 6 0t6 0M1241 139q3-3 6 0t6 0" fill="none" stroke="#6060a0"/>
<circle cx="1269" cy="131" r="3" fill="#555"/><circle cx="1275" cy="136" r="3.500" fill="#222"/><path d="M1266 131h6M1269 128v6M1271 136h8M1275 132v8" stroke="#222"/>
<!-- subtype dd -->
<rect x="1116" y="153" width="162" height="19" fill="#e0e0e0"/><path class="k" d="M1116.500 172V153.500H1278" fill="none" stroke="#666"/><path class="k" d="M1116 172.500H1278.500V153" fill="none" stroke="#eee"/>
<use href="#dd" x="1261" y="155" width="16" height="16"/>
<text x="1120" y="167" textLength="90" lengthAdjust="spacingAndGlyphs">Standard Primitives</text>

<!-- rollouts frame -->
<path class="k" d="M1108.500 947V180.500H1283" fill="none" stroke="#777"/><path class="k" d="M1108 947.500H1283.500V180" fill="none" stroke="#eee"/>
<!-- object type -->
<path class="k" d="M1112.500 327V194.500H1114M1273 194.500H1276" fill="none" stroke="#777"/><path class="k" d="M1112 327.500H1276.500V194" fill="none" stroke="#eee"/>
<rect x="1115.500" y="185.500" width="157" height="15" fill="#b4b4b4" stroke="#000" class="k"/>
<text x="1121" y="197" style="font-size:13px">-</text>
<text x="1165" y="197" textLength="58" lengthAdjust="spacingAndGlyphs">Object Type</text>
<rect x="1146.500" y="204.500" width="11" height="12" fill="none" stroke="#777" class="k"/><path class="k" d="M1147 216.500H1158.500V204" stroke="#eee" fill="none"/>
<text x="1171" y="216" textLength="41" lengthAdjust="spacingAndGlyphs" style="fill:#eee">AutoGrid</text>
<text x="1170" y="215" textLength="41" lengthAdjust="spacingAndGlyphs" class="g">AutoGrid</text>
<g class="k" fill="none">
<path d="M1121.500 239V221.500H1190" stroke="#ececec"/><path d="M1121 238.500H1190.500V221" stroke="#666"/>
<path d="M1199.500 239V221.500H1268" stroke="#ececec"/><path d="M1199 238.500H1268.500V221" stroke="#666"/>
<path d="M1121.500 260V242.500H1190" stroke="#ececec"/><path d="M1121 259.500H1190.500V242" stroke="#666"/>
<path d="M1199.500 260V242.500H1268" stroke="#ececec"/><path d="M1199 259.500H1268.500V242" stroke="#666"/>
<path d="M1121.500 281V263.500H1190" stroke="#ececec"/><path d="M1121 280.500H1190.500V263" stroke="#666"/>
<path d="M1199.500 281V263.500H1268" stroke="#ececec"/><path d="M1199 280.500H1268.500V263" stroke="#666"/>
<path d="M1121.500 302V284.500H1190" stroke="#ececec"/><path d="M1121 301.500H1190.500V284" stroke="#666"/>
<path d="M1199.500 302V284.500H1268" stroke="#ececec"/><path d="M1199 301.500H1268.500V284" stroke="#666"/>
<path d="M1121.500 323V305.500H1190" stroke="#ececec"/><path d="M1121 322.500H1190.500V305" stroke="#666"/>
<path d="M1199.500 323V305.500H1268" stroke="#ececec"/><path d="M1199 322.500H1268.500V305" stroke="#666"/>
</g>
<text x="1147" y="234" textLength="18" lengthAdjust="spacingAndGlyphs">Box</text>
<text x="1222" y="234" textLength="24" lengthAdjust="spacingAndGlyphs">Cone</text>
<text x="1138" y="255" textLength="34" lengthAdjust="spacingAndGlyphs">Sphere</text>
<text x="1206" y="255" textLength="55" lengthAdjust="spacingAndGlyphs">GeoSphere</text>
<text x="1137" y="276" textLength="38" lengthAdjust="spacingAndGlyphs">Cylinder</text>
<text x="1221" y="276" textLength="26" lengthAdjust="spacingAndGlyphs">Tube</text>
<text x="1143" y="297" textLength="26" lengthAdjust="spacingAndGlyphs">Torus</text>
<text x="1215" y="297" textLength="38" lengthAdjust="spacingAndGlyphs">Pyramid</text>
<text x="1138" y="318" textLength="34" lengthAdjust="spacingAndGlyphs">Teapot</text>
<text x="1220" y="318" textLength="27" lengthAdjust="spacingAndGlyphs">Plane</text>
<!-- name and color -->
<path class="k" d="M1112.500 385V343.500H1114M1273 343.500H1276" fill="none" stroke="#777"/><path class="k" d="M1112 385.500H1276.500V343" fill="none" stroke="#eee"/>
<rect x="1115.500" y="334.500" width="157" height="15" fill="#b4b4b4" stroke="#000" class="k"/>
<text x="1121" y="346" style="font-size:13px">-</text>
<text x="1156" y="346" textLength="76" lengthAdjust="spacingAndGlyphs">Name and Color</text>
<rect x="1119" y="357" width="132" height="20" fill="#e4e4e4"/><path class="k" d="M1119.500 377V357.500H1251" fill="none" stroke="#111"/><path class="k" d="M1119 376.500H1250.500V357" fill="none" stroke="#eee"/>
<rect x="1254" y="357" width="17" height="20" fill="#e2d696"/><path class="k" d="M1254.500 377V357.500H1271" fill="none" stroke="#888"/><path class="k" d="M1254 376.500H1270.500V357" fill="none" stroke="#eee"/>
</svg>
</body></html>
